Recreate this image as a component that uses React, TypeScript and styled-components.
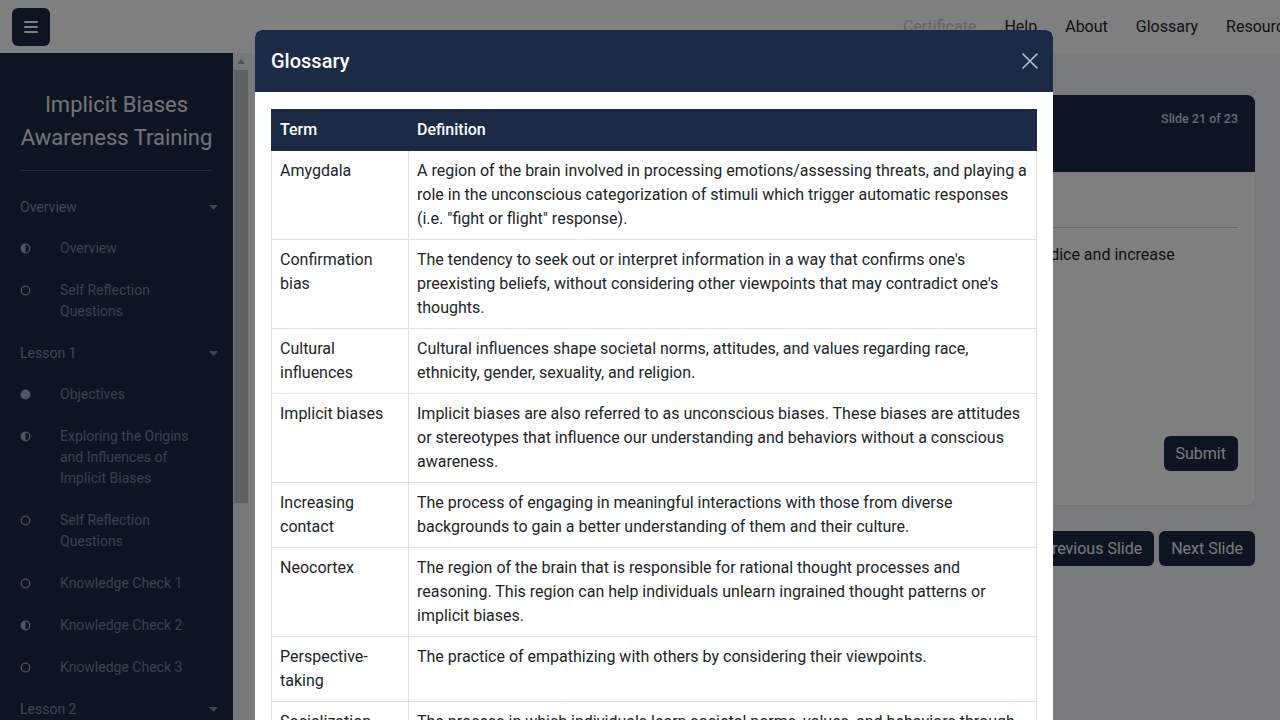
import React from "react";
import styled, { createGlobalStyle } from "styled-components";

const NAVY = "#1b2a45";

const GlobalStyle = createGlobalStyle`
  html, body { margin: 0; padding: 0; height: 100%; overflow: hidden; }
  body { font-family: Roboto, "Liberation Sans", Arial, sans-serif; color: #212529; background: #f3f5f8; }
  * { box-sizing: border-box; }
`;

const Page = styled.div`
  width: 1280px;
  height: 720px;
  display: flex;
  flex-direction: column;
  overflow: hidden;
`;

const TopBar = styled.header`
  height: 53px;
  flex-shrink: 0;
  background: #ffffff;
  display: flex;
  align-items: center;
  padding: 0 12px;
`;

const MenuButton = styled.button`
  width: 38px;
  height: 38px;
  border: none;
  border-radius: 6px;
  background: ${NAVY};
  display: flex;
  align-items: center;
  justify-content: center;
  padding: 0;
`;

const NavList = styled.nav`
  margin-left: auto;
  margin-right: -47px;
  display: flex;
  flex-shrink: 0;
`;

const NavLink = styled.a<{ $disabled?: boolean }>`
  padding: 0 14px;
  font-size: 16px;
  line-height: 24px;
  color: ${(p) => (p.$disabled ? "#c7cbd0" : "#212529")};
  text-decoration: none;
  white-space: nowrap;
`;

const Body = styled.div`
  flex: 1;
  min-height: 0;
  display: flex;
`;

const Sidebar = styled.aside`
  width: 249px;
  flex-shrink: 0;
  display: flex;
  overflow: hidden;
`;

const SideNav = styled.div`
  width: 233px;
  flex-shrink: 0;
  background: ${NAVY};
  overflow: hidden;
`;

const ScrollTrack = styled.div`
  width: 16px;
  flex-shrink: 0;
  background: #f1f1f1;
  display: flex;
  flex-direction: column;
  align-items: center;
`;

const ScrollArrow = styled.div`
  height: 16px;
  width: 16px;
  display: flex;
  align-items: center;
  justify-content: center;
`;

const ScrollThumb = styled.div`
  width: 14px;
  height: 433px;
  margin-top: 1px;
  background: #c1c1c1;
`;

const SideTitle = styled.h1`
  margin: 0;
  padding: 35px 10px 0;
  font-size: 22px;
  line-height: 33px;
  font-weight: 400;
  text-align: center;
  color: #e6e7ec;
`;

const SideDivider = styled.hr`
  margin: 16px 21px 16px 20px;
  border: none;
  border-top: 1px solid rgba(255, 255, 255, 0.22);
`;

const SectionHead = styled.div`
  display: flex;
  align-items: center;
  justify-content: space-between;
  padding: 10px 15px 10px 20px;
  font-size: 14px;
  line-height: 21px;
  color: #868e9d;
`;

const Item = styled.div`
  display: grid;
  grid-template-columns: 40px 1fr;
  padding: 10px 28px 11px 20px;
  font-size: 14px;
  line-height: 21px;
  color: #7c8494;
`;

const IconCell = styled.span`
  height: 21px;
  display: flex;
  align-items: center;
`;

const Main = styled.main`
  flex: 1;
  min-width: 0;
  background: #f3f5f8;
  padding: 42px 25px 0 25px;
`;

const Card = styled.section`
  background: #ffffff;
  border-radius: 8px;
  box-shadow: 0 1px 3px rgba(0, 0, 0, 0.08);
`;

const CardHeader = styled.div`
  height: 77px;
  background: ${NAVY};
  border-radius: 8px 8px 0 0;
  padding: 15px 17px 14px;
  display: flex;
  justify-content: space-between;
  align-items: flex-start;
  color: #fff;
`;

const CardTitle = styled.h2`
  margin: 0;
  font-size: 22px;
  font-weight: 500;
  line-height: 30px;
  padding-top: 9px;
`;

const SlideCount = styled.span`
  font-size: 12.5px;
  font-weight: 500;
  line-height: 18px;
  color: #cfd3db;
`;

const CardBody = styled.div`
  padding: 17px 17px 34px;
`;

const BodyHeading = styled.h3`
  margin: 0 0 16px;
  font-size: 18px;
  line-height: 22px;
  font-weight: 500;
`;

const Rule = styled.hr`
  margin: 0 0 15px;
  border: none;
  border-top: 1px solid #c9cdd3;
`;

const Question = styled.p`
  margin: 0;
  font-size: 16px;
  line-height: 24px;
`;

const Options = styled.div`
  margin-top: 14px;
  display: flex;
  flex-direction: column;
  gap: 8px;
`;

const Option = styled.label`
  display: flex;
  align-items: center;
  gap: 8px;
  font-size: 16px;
  line-height: 24px;
`;

const ActionRow = styled.div<{ $gap?: number; $top?: number }>`
  display: flex;
  justify-content: flex-end;
  gap: ${(p) => p.$gap ?? 0}px;
  margin-top: ${(p) => p.$top ?? 0}px;
`;

const DarkButton = styled.button`
  border: none;
  border-radius: 6px;
  background: ${NAVY};
  color: #f2f3f6;
  font-family: inherit;
  font-size: 16px;
  line-height: 24px;
  padding: 5.5px 12px;
`;

const Backdrop = styled.div`
  position: fixed;
  inset: 0;
  background: rgba(0, 0, 0, 0.5);
  z-index: 10;
`;

const ModalBox = styled.div`
  position: fixed;
  top: 30px;
  left: 255px;
  width: 798px;
  height: 720px;
  background: #ffffff;
  border-radius: 7px;
  overflow: hidden;
  z-index: 11;
`;

const ModalHeader = styled.div`
  height: 62px;
  background: ${NAVY};
  display: flex;
  align-items: center;
  justify-content: space-between;
  padding: 0 15px 0 16px;
`;

const ModalTitle = styled.h2`
  margin: 0;
  font-size: 20px;
  font-weight: 500;
  line-height: 24px;
  color: #ffffff;
`;

const CloseButton = styled.button`
  border: none;
  background: transparent;
  padding: 0;
  width: 16px;
  height: 16px;
  display: flex;
`;

const ModalBody = styled.div`
  padding: 17px 16px;
`;

const Table = styled.table`
  width: 100%;
  border-collapse: collapse;
  table-layout: fixed;
  font-size: 16px;
  line-height: 24px;
`;

const Th = styled.th`
  background: ${NAVY};
  color: #ffffff;
  font-weight: 500;
  text-align: left;
  padding: 8px;
  border: 1px solid ${NAVY};
`;

const Td = styled.td`
  padding: 8px;
  border: 1px solid #dee2e6;
  vertical-align: top;
  color: #212529;
`;

type Status = "half" | "empty" | "full";

const StatusIcon = ({ s }: { s: Status }) => (
  <svg width="11" height="11" viewBox="0 0 11 11">
    {s === "full" ? (
      <circle cx="5.5" cy="5.5" r="5" fill="#a3a9b6" />
    ) : (
      <>
        <circle cx="5.5" cy="5.5" r="4.3" fill="none" stroke="#a3a9b6" strokeWidth="1.3" />
        {s === "half" && <path d="M5.5 1.2 A4.3 4.3 0 0 0 5.5 9.8 Z" fill="#a3a9b6" />}
      </>
    )}
  </svg>
);

const Caret = () => (
  <svg width="9" height="5" viewBox="0 0 9 5">
    <path d="M0 0 L9 0 L4.5 5 Z" fill="#868e9d" />
  </svg>
);

const sections: { title: string; items: { label: string; s: Status }[] }[] = [
  {
    title: "Overview",
    items: [
      { label: "Overview", s: "half" },
      { label: "Self Reflection Questions", s: "empty" },
    ],
  },
  {
    title: "Lesson 1",
    items: [
      { label: "Objectives", s: "full" },
      { label: "Exploring the Origins and Influences of Implicit Biases", s: "half" },
      { label: "Self Reflection Questions", s: "empty" },
      { label: "Knowledge Check 1", s: "empty" },
      { label: "Knowledge Check 2", s: "half" },
      { label: "Knowledge Check 3", s: "empty" },
    ],
  },
  {
    title: "Lesson 2",
    items: [
      { label: "Objectives", s: "empty" },
      { label: "Recognizing Implicit Biases", s: "empty" },
      { label: "Knowledge Check 1", s: "empty" },
      { label: "Knowledge Check 2", s: "empty" },
    ],
  },
  { title: "Lesson 3", items: [] },
];

const glossary: [string, string][] = [
  [
    "Amygdala",
    'A region of the brain involved in processing emotions/assessing threats, and playing a role in the unconscious categorization of stimuli which trigger automatic responses (i.e. "fight or flight" response).',
  ],
  [
    "Confirmation bias",
    "The tendency to seek out or interpret information in a way that confirms one's preexisting beliefs, without considering other viewpoints that may contradict one's thoughts.",
  ],
  [
    "Cultural influences",
    "Cultural influences shape societal norms, attitudes, and values regarding race, ethnicity, gender, sexuality, and religion.",
  ],
  [
    "Implicit biases",
    "Implicit biases are also referred to as unconscious biases. These biases are attitudes or stereotypes that influence our understanding and behaviors without a conscious awareness.",
  ],
  [
    "Increasing contact",
    "The process of engaging in meaningful interactions with those from diverse backgrounds to gain a better understanding of them and their culture.",
  ],
  [
    "Neocortex",
    "The region of the brain that is responsible for rational thought processes and reasoning. This region can help individuals unlearn ingrained thought patterns or implicit biases.",
  ],
  ["Perspective-taking", "The practice of empathizing with others by considering their viewpoints."],
  [
    "Socialization",
    "The process in which individuals learn societal norms, values, and behaviors through interactions with family, peers, schools, and the media.",
  ],
];

export default function App() {
  return (
    <>
      <GlobalStyle />
      <Page>
        <TopBar>
          <MenuButton aria-label="menu">
            <svg width="14" height="12" viewBox="0 0 14 12">
              <rect x="0" y="0" width="14" height="2" rx="1" fill="#ffffff" />
              <rect x="0" y="5" width="14" height="2" rx="1" fill="#ffffff" />
              <rect x="0" y="10" width="14" height="2" rx="1" fill="#ffffff" />
            </svg>
          </MenuButton>
          <NavList>
            <NavLink $disabled>Certificate</NavLink>
            <NavLink>Help</NavLink>
            <NavLink>About</NavLink>
            <NavLink>Glossary</NavLink>
            <NavLink>Resources</NavLink>
          </NavList>
        </TopBar>
        <Body>
          <Sidebar>
            <SideNav>
              <SideTitle>Implicit Biases Awareness Training</SideTitle>
              <SideDivider />
              {sections.map((sec) => (
                <div key={sec.title}>
                  <SectionHead>
                    <span>{sec.title}</span>
                    <Caret />
                  </SectionHead>
                  {sec.items.map((it, i) => (
                    <Item key={i}>
                      <IconCell>
                        <StatusIcon s={it.s} />
                      </IconCell>
                      <span>{it.label}</span>
                    </Item>
                  ))}
                </div>
              ))}
            </SideNav>
            <ScrollTrack>
              <ScrollArrow>
                <svg width="8" height="5" viewBox="0 0 8 5">
                  <path d="M0 5 L8 5 L4 0 Z" fill="#a3a3a3" />
                </svg>
              </ScrollArrow>
              <ScrollThumb />
            </ScrollTrack>
          </Sidebar>
          <Main>
            <Card>
              <CardHeader>
                <CardTitle>Knowledge Check 3</CardTitle>
                <SlideCount>Slide 21 of 23</SlideCount>
              </CardHeader>
              <CardBody>
                <BodyHeading>Question</BodyHeading>
                <Rule />
                <Question>
                  Which of the following is an effective strategy that individuals can use to help reduce implicit bias and prejudice and
                  increase empathy toward others?
                </Question>
                <Options>
                  <Option><input type="radio" name="q" /> Increasing contact</Option>
                  <Option><input type="radio" name="q" /> Perspective-taking</Option>
                  <Option><input type="radio" name="q" /> Both of the above</Option>
                  <Option><input type="radio" name="q" /> None of the above</Option>
                </Options>
                <ActionRow $top={11}>
                  <DarkButton>Submit</DarkButton>
                </ActionRow>
              </CardBody>
            </Card>
            <ActionRow $gap={5} $top={26}>
              <DarkButton>Previous Slide</DarkButton>
              <DarkButton>Next Slide</DarkButton>
            </ActionRow>
          </Main>
        </Body>
      </Page>
      <Backdrop />
      <ModalBox role="dialog">
        <ModalHeader>
          <ModalTitle>Glossary</ModalTitle>
          <CloseButton aria-label="close">
            <svg width="16" height="16" viewBox="0 0 16 16">
              <path d="M1 1 L15 15 M15 1 L1 15" stroke="#b9c0cc" strokeWidth="1.6" strokeLinecap="round" />
            </svg>
          </CloseButton>
        </ModalHeader>
        <ModalBody>
          <Table>
            <colgroup>
              <col style={{ width: 137 }} />
              <col />
            </colgroup>
            <thead>
              <tr>
                <Th>Term</Th>
                <Th>Definition</Th>
              </tr>
            </thead>
            <tbody>
              {glossary.map(([t, d]) => (
                <tr key={t}>
                  <Td>{t}</Td>
                  <Td>{d}</Td>
                </tr>
              ))}
            </tbody>
          </Table>
        </ModalBody>
      </ModalBox>
    </>
  );
}
